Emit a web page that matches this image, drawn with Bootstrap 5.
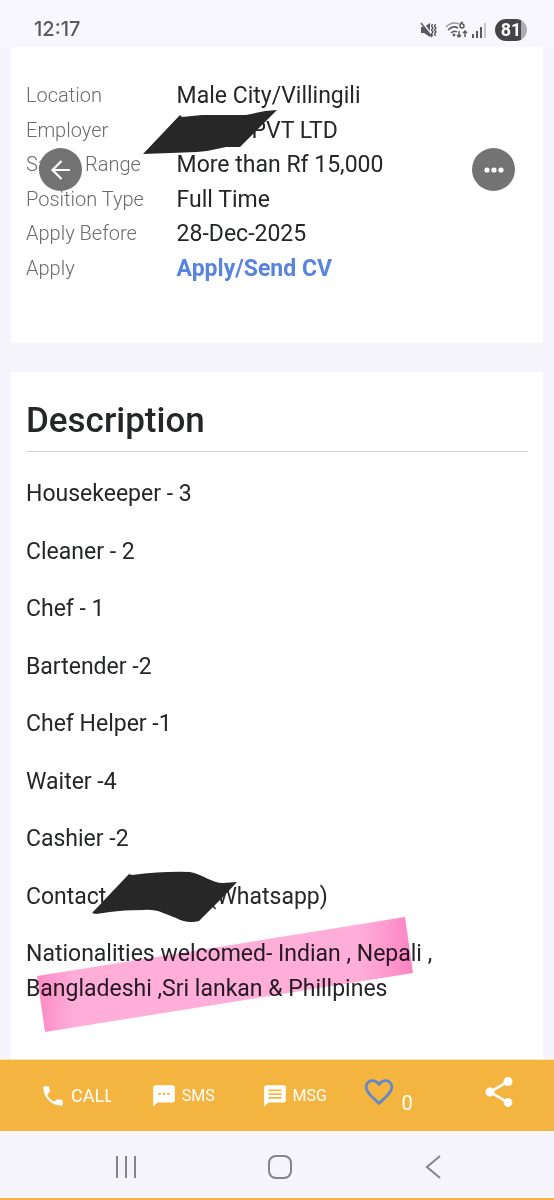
<!DOCTYPE html>
<html lang="en">
<head>
<meta charset="utf-8">
<meta name="viewport" content="width=device-width, initial-scale=1">
<title>Job details</title>
<link href="https://cdn.jsdelivr.net/npm/bootstrap@5.3.0/dist/css/bootstrap.min.css" rel="stylesheet">
<style>
  body { font-family: Roboto, sans-serif; font-size: 23px; line-height: 1.5; color: #252628; background: #f4f4fa; }
  svg { display: block; flex: none; }
  .status-bar { height: 47px; padding: 11px 27px 0 34px; background: #f9f7fe; color: #5b585f; }
  .clock { font: 500 20px/36px Inter, sans-serif; }
  .battery { width: 32px; height: 22px; border-radius: 11px; background: linear-gradient(90deg, #454449 80%, #aeacb2 80%); color: #fff; font: 700 18px/22px Roboto, sans-serif; }
  .page-main { padding: 0 11px; gap: 29px; }
  .panel { background: #fff; padding: 0 15px; }
  .details { padding-top: 32px; padding-bottom: 57px; }
  .facts { display: grid; grid-template-columns: 30% 1fr; }
  .facts dt { font-size: 20px; line-height: 32px; font-weight: 300; color: #6c6c6c; }
  .facts dd { font-size: 23px; }
  .apply-link { color: #5883de; font-weight: 700; }
  .round-btn { top: 101px; width: 43px; height: 43px; background: #737373; z-index: 2; }
  .round-back { left: 28px; }
  .round-more { right: 28px; }
  .masked { display: inline-block; position: relative; height: 23px; vertical-align: middle; }
  .masked svg { position: absolute; fill: #272727; }
  .mask-employer { width: 75px; }
  .mask-employer svg { left: -35px; top: -10px; }
  .mask-phone { width: 102px; }
  .mask-phone svg { left: -14px; top: -15px; }
  .about h1 { font-size: 35px; font-weight: 500; line-height: 42px; padding: 28px 0 9px; border-bottom: 1px solid #d4d4d4; margin-bottom: 25px; }
  .about p { margin-bottom: 23px; }
  .marker { position: absolute; left: 11px; top: -20px; mix-blend-mode: multiply; }
  .action-bar { height: 72px; background: #f3b53f; border-top: 1px solid #f9e7b0; z-index: 3; }
  .action { width: 20%; padding: 0 0 0 40px; gap: 5px; border: 0; background: none; color: #fff; font-size: 16px; overflow: hidden; }
  .action svg { fill: currentColor; }
  .action-call { font-size: 18px; }
  .action-like { padding-left: 30px; font-size: 20px; }
  .action-like svg { fill: #6588c9; }
  .action-share { padding-left: 38px; }
  .raised { margin-bottom: 8px; }
  .lowered { margin-top: 14px; }
  .system-nav { height: 69px; padding: 4px 0 0 5px; background: #f4f4fa; border-bottom: 2px solid #f3b53f; }
  .system-nav button { width: 28%; border: 0; background: none; }
  .system-nav svg { fill: none; stroke: #84838a; stroke-width: 2; margin: auto; }
</style>
</head>
<body>
<div class="d-flex flex-column min-vh-100">
  <header class="status-bar d-flex justify-content-between align-items-start">
    <span class="clock">12:17</span>
    <div class="d-flex align-items-center mt-2">
      <svg class="me-2" width="17" height="18" viewBox="0 0 17 18" fill="none" stroke="#5b585f" stroke-width="1.4"><path d="M1 6h3l6-4v14l-6-4H1z" fill="#5b585f" stroke="none"/><path d="M2 1l10 13" stroke="#f9f7fe" stroke-width="2"/><path d="M1 2l11 14M12.500 3l-1 2 1.500 2-1.500 2 1.500 2-1.500 2 1 2M15.500 3l-1 2 1.500 2-1.500 2 1.500 2-1.500 2 1 2"/></svg>
      <svg class="me-1" width="23" height="20" viewBox="0 0 23 20" fill="none" stroke="#5b585f" stroke-width="1.5"><path d="M1 7Q7 1 14 4" stroke="#9b989f"/><path d="M3 10Q8 5 13 8M6 13Q9 10 12 12"/><circle cx="9" cy="15" r="1.4" fill="#5b585f" stroke="none"/><path d="M18 2q-3 1-3 4a2 2 0 1 0 2-2M14 11v6m-2-2l2 2 2-2M20 17v-6m-2 2l2-2 2 2"/></svg>
      <svg class="me-2" width="15" height="16" viewBox="0 0 15 16" fill="#5b585f"><path d="M0 12h2v4H0zM4 9h2v7H4zM8 5h2v11H8z"/><path d="M12 1h2v15h-2z" fill="#c9c7ce"/></svg>
      <span class="battery text-center">81</span>
    </div>
  </header>

  <main class="page-main d-flex flex-column flex-grow-1">
    <section class="panel details position-relative">
      <dl class="facts m-0">
        <dt>Location</dt><dd class="m-0">Male City/Villingili</dd>
        <dt>Employer</dt>
        <dd class="m-0"><span class="masked mask-employer"><svg width="136" height="46" viewBox="0 0 136 46"><path d="M1 44L38 5l2 2 20-2 44 0 19-4 12-1-37 37-14 0-19 4-10 1z"/></svg></span>PVT LTD</dd>
        <dt>Salary Range</dt><dd class="m-0">More than Rf 15,000</dd>
        <dt>Position Type</dt><dd class="m-0">Full Time</dd>
        <dt>Apply Before</dt><dd class="m-0">28-Dec-2025</dd>
        <dt>Apply</dt><dd class="m-0"><a class="apply-link text-decoration-none" href="#apply">Apply/Send CV</a></dd>
      </dl>
      <button type="button" class="round-btn round-back btn p-0 border-0 rounded-circle position-absolute d-flex align-items-center justify-content-center" aria-label="Back">
        <svg width="22" height="22" viewBox="0 0 22 22" fill="none" stroke="#fff" stroke-width="2.2"><path d="M20 11H3M11.500 2L2.500 11l9 9"/></svg>
      </button>
      <button type="button" class="round-btn round-more btn p-0 border-0 rounded-circle position-absolute d-flex align-items-center justify-content-center" aria-label="More">
        <svg width="20" height="6" viewBox="0 0 20 6" fill="#fff"><circle cx="3" cy="3" r="2.600"/><circle cx="10" cy="3" r="2.600"/><circle cx="17" cy="3" r="2.600"/></svg>
      </button>
    </section>

    <section class="panel about flex-grow-1">
      <h1>Description</h1>
      <p>Housekeeper - 3</p>
      <p>Cleaner - 2</p>
      <p>Chef - 1</p>
      <p>Bartender -2</p>
      <p>Chef Helper -1</p>
      <p>Waiter -4</p>
      <p>Cashier -2</p>
      <p>Contact<span class="masked mask-phone"><svg width="146" height="52" viewBox="0 0 146 52"><path d="M0 42L37 3l3 1Q72 0 98 1C112 4 120 12 131 12l14-1-14 15-24 24Q95 53 84 47C72 43 66 38 52 39Q30 39 18 41L4 43z"/></svg></span>(Whatsapp)</p>
      <p class="position-relative">Nationalities welcomed- Indian , Nepali ,<br>Bangladeshi ,Sri lankan &amp; Phillpines
        <svg class="marker" width="378" height="116" viewBox="0 0 378 116" aria-hidden="true"><defs><linearGradient id="ink"><stop offset="0" stop-color="#fc8ac5"/><stop offset=".1" stop-color="#ffaeda"/><stop offset=".86" stop-color="#ffaeda"/><stop offset="1" stop-color="#fb83c1"/></linearGradient></defs><path fill="url(#ink)" d="M0 59L368 0l8 56L8 115z"/></svg>
      </p>
    </section>
  </main>

  <div class="sticky-bottom">
    <div class="action-bar d-flex">
      <button type="button" class="action action-call d-flex align-items-center"><svg width="26" height="26" viewBox="0 0 24 24"><path d="M6.620 10.790c1.440 2.830 3.760 5.140 6.590 6.590l2.200-2.200c.27-.27.67-.36 1.020-.24 1.120.37 2.330.57 3.570.57.55 0 1 .45 1 1V20c0 .55-.45 1-1 1-9.390 0-17-7.610-17-17 0-.55.45-1 1-1h3.500c.55 0 1 .45 1 1 0 1.250.2 2.450.57 3.570.11.35.03.74-.25 1.020l-2.200 2.200z"/></svg>CALL</button>
      <button type="button" class="action d-flex align-items-center"><svg width="26" height="26" viewBox="0 0 24 24"><path d="M20 2H4c-1.100 0-1.990.9-1.990 2L2 22l4-4h14c1.100 0 2-.9 2-2V4c0-1.100-.9-2-2-2zM9 11H7V9h2v2zm4 0h-2V9h2v2zm4 0h-2V9h2v2z"/></svg>SMS</button>
      <button type="button" class="action d-flex align-items-center"><svg width="26" height="26" viewBox="0 0 24 24"><path d="M20 2H4c-1.100 0-1.990.9-1.990 2L2 22l4-4h14c1.100 0 2-.9 2-2V4c0-1.100-.9-2-2-2zM6 6h12v1.500H6zm0 3.500h12V11H6zM6 13h12v1.500H6z" fill-rule="evenodd"/></svg>MSG</button>
      <button type="button" class="action action-like d-flex align-items-center" aria-label="Like, 0"><svg class="raised" width="34" height="34" viewBox="0 0 24 24"><path d="M16.500 3c-1.740 0-3.410.81-4.500 2.090C10.910 3.810 9.240 3 7.500 3 4.420 3 2 5.420 2 8.500c0 3.780 3.400 6.860 8.550 11.540L12 21.350l1.450-1.320C18.600 15.360 22 12.280 22 8.500 22 5.420 19.580 3 16.500 3zm-4.400 15.550l-.1.100-.1-.1C7.140 14.240 4 11.390 4 8.500 4 6.500 5.500 5 7.500 5c1.540 0 3.040.99 3.570 2.360h1.870C13.460 5.990 14.960 5 16.500 5c2 0 3.500 1.500 3.500 3.500 0 2.890-3.140 5.740-7.900 10.050z"/></svg><span class="lowered">0</span></button>
      <button type="button" class="action action-share d-flex align-items-center" aria-label="Share"><svg class="raised" width="36" height="36" viewBox="0 0 24 24"><path d="M18 16.080c-.76 0-1.440.3-1.960.77L8.910 12.700c.05-.23.09-.46.09-.7s-.04-.47-.09-.7l7.050-4.110c.54.5 1.250.81 2.040.81 1.660 0 3-1.340 3-3s-1.340-3-3-3-3 1.340-3 3c0 .24.04.47.09.7L8.040 9.810C7.500 9.310 6.790 9 6 9c-1.660 0-3 1.340-3 3s1.340 3 3 3c.79 0 1.500-.31 2.040-.81l7.120 4.160c-.05.21-.08.43-.08.65 0 1.610 1.310 2.920 2.920 2.920s2.920-1.310 2.920-2.920-1.310-2.920-2.920-2.920z"/></svg></button>
    </div>
    <nav class="system-nav d-flex justify-content-center align-items-center" aria-label="System">
      <button type="button" aria-label="Recents"><svg width="22" height="24" viewBox="0 0 22 24"><path d="M2 1v22M11 1v22M20 1v22"/></svg></button>
      <button type="button" aria-label="Home"><svg width="24" height="24" viewBox="0 0 24 24"><rect x="1" y="1" width="22" height="22" rx="7"/></svg></button>
      <button type="button" aria-label="Back"><svg width="16" height="24" viewBox="0 0 16 24"><path d="M15 1L2 12l13 11"/></svg></button>
    </nav>
  </div>
</div>
<script src="https://cdn.jsdelivr.net/npm/bootstrap@5.3.0/dist/js/bootstrap.bundle.min.js"></script>
</body>
</html>
